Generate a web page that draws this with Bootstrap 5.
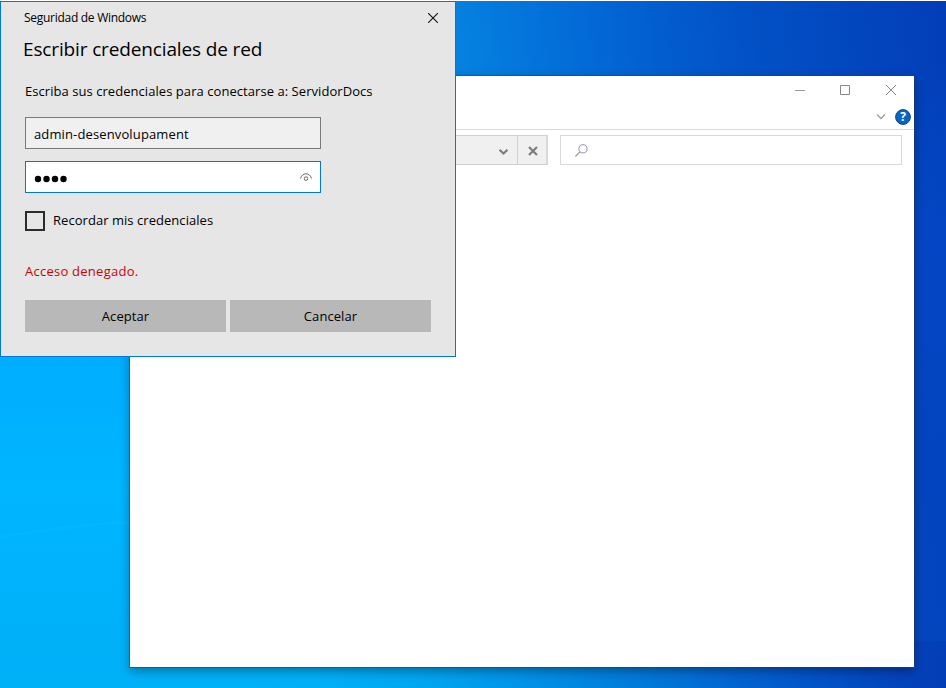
<!DOCTYPE html>
<html lang="es">
<head>
<meta charset="utf-8">
<meta name="viewport" content="width=device-width, initial-scale=1">
<title>Seguridad de Windows</title>
<link href="https://cdn.jsdelivr.net/npm/bootstrap@5.3.0/dist/css/bootstrap.min.css" rel="stylesheet">
<style>
body{font-family:"Open Sans","Noto Sans",sans-serif;font-size:13px;line-height:20px;color:#000}
svg{display:block}
.desktop{width:946px;height:688px;border-top:1px solid #fff;
 background:
 linear-gradient(180deg,rgba(3,70,196,0) 60px,rgba(4,73,203,.6) 240px,rgba(3,69,193,.7) 450px,rgba(3,64,184,0) 687px) 100% 0/46px 687px no-repeat,
 linear-gradient(83deg,#0581e0 530px,#036dd8 635px,#025ecf 725px,#0250c5 825px,#0246be 925px,#033db7 1017px) 0 0/946px 640px no-repeat,
 linear-gradient(90deg,#00b2f9 0,#00b0f7 320px,#00a3f0 440px,#008be2 560px,#0271d6 680px,#0256ca 800px,#0345bc 890px,#033db5 946px) 0 100%/946px 48px no-repeat}
.side{left:0;top:350px;width:130px;height:338px;background:linear-gradient(180deg,#00adff,#00b6ff 140px,#00b4fd 190px,#00b0f7)}
.ray{left:0;top:520px}
.explorer{left:130px;top:76px;width:784px;height:591px;background:#fff;box-shadow:0 0 0 1px rgba(50,60,75,.5),0 4px 10px rgba(0,0,0,.36)}
.titlebar{height:28px;padding-right:18px;gap:36px}
.titlebar svg:first-child{margin-right:-1px}
.ribbon{height:26px;border-bottom:1px solid #dadada;padding-right:3px;gap:9px}
.toolrow{padding:5px 12px 0 0;gap:12px}
.addr{width:418px;height:30px;background:#f0f0f0;border:1px solid #d0d0d0;border-right-width:2px;border-right-color:#d9d9d9}
.stopbtn{width:30px;border-left:1px solid #d0d0d0;padding-top:2px;margin-right:-1px;padding-left:1px}
.find{height:30px;border:1px solid #d9d9d9;padding-left:14px}
.dialog{left:0;top:1px;width:456px;height:356px;background:#e6e6e6;border:1px solid #0078d7;padding:0 24px}
.cap{height:32px;font-size:12px;margin-left:-1px;margin-right:-7px}
.cap span{letter-spacing:-.28px}
.heading{font-size:19px;line-height:28px;margin:1px 0 0 -2px;font-weight:400;letter-spacing:-.14px}
.msg{margin:18px 0 0;height:20px;letter-spacing:.055px}
.field{width:296px;height:32px;padding:1px 8px 0;border:1px solid #7a7a7a;background:#f0f0f0;letter-spacing:.13px}
.field.active{border-color:#0078d7;background:#fff;margin-top:12px;padding-top:0}
.field.active svg:first-child{margin-top:3px}
.box{width:20px;height:20px;border:2px solid #2b2b2b}
.remember{margin-top:18px;gap:8px;height:20px;letter-spacing:.045px}
.remember span{margin-top:-2px}
.err{color:#c50500;margin-top:30px;height:20px;letter-spacing:.25px}
.dlg-actions{gap:4px;margin-top:19px}
.dlg-btn{width:201px;height:32px;background:#b8b8b8;border:0;border-radius:0;padding:0;font-size:13px;line-height:32px;color:#000;letter-spacing:.07px}
</style>
</head>
<body>
<main class="desktop position-relative overflow-hidden">
<div class="side position-absolute"></div>
</main>
<svg class="ray position-absolute" width="130" height="30" viewBox="0 0 130 30"><path d="M0 17Q75 5 130 2" fill="none" stroke="#08bbff" stroke-width="3" opacity=".5"/></svg>

<section class="explorer position-absolute">
 <div class="titlebar d-flex justify-content-end align-items-center">
  <svg width="10" height="10" viewBox="0 0 10 10"><path d="M0 5.500H10" stroke="#999"/></svg>
  <svg width="10" height="10" viewBox="0 0 10 10"><path d="M.5 .5h9v9h-9z" fill="none" stroke="#888"/></svg>
  <svg width="10" height="10" viewBox="0 0 10 10"><path d="M0 0l10 10M10 0l-10 10" fill="none" stroke="#8a8a8a"/></svg>
 </div>
 <div class="ribbon d-flex justify-content-end align-items-center">
  <svg width="10" height="7" viewBox="0 0 10 7"><path d="M1 1.500l4 4 4-4" fill="none" stroke="#a0a0a0" stroke-width="1.4"/></svg>
  <svg width="16" height="16" viewBox="0 0 16 16"><circle cx="8" cy="8" r="7.400" fill="#0566c6" stroke="#174774" stroke-width="1"/><text x="8" y="12.400" text-anchor="middle" font-family="Open Sans" font-weight="700" font-size="12" fill="#fff">?</text></svg>
 </div>
 <div class="toolrow d-flex">
  <div class="addr d-flex justify-content-end flex-shrink-0">
   <div class="d-flex align-items-center pe-2 pt-1"><svg width="11" height="8" viewBox="0 0 11 8"><path d="M1.500 1.700l4 3.800 4-3.800" fill="none" stroke="#7d7d7d" stroke-width="2.2"/></svg></div>
   <div class="stopbtn d-flex align-items-center justify-content-center"><svg width="10" height="10" viewBox="0 0 10 10"><path d="M1 1l8 8M9 1l-8 8" stroke="#7d7d7d" stroke-width="2.2"/></svg></div>
  </div>
  <div class="find d-flex align-items-center flex-grow-1"><svg width="13" height="13" viewBox="0 0 13 13" fill="none"><circle cx="8" cy="4.800" r="4.100" stroke="#9a94a8" stroke-width="1"/><path d="M5 7.800L.4 12.400" stroke="#9a8f8a" stroke-width="1.2"/></svg></div>
 </div>
</section>

<section class="dialog position-absolute">
 <div class="cap d-flex justify-content-between align-items-center"><span>Seguridad de Windows</span>
  <svg width="10" height="10" viewBox="0 0 10 10"><path d="M0 0l10 10M10 0l-10 10" stroke="#111" stroke-width="1.1"/></svg></div>
 <h1 class="heading"><span>Escribir credenciales de red</span></h1>
 <p class="msg"><span>Escriba sus credenciales para conectarse a: ServidorDocs</span></p>
 <div class="pt-3">
  <div class="field d-flex align-items-center"><span>admin-desenvolupament</span></div>
  <div class="field active d-flex align-items-center justify-content-between">
   <svg width="34" height="8" viewBox="0 0 34 8"><g fill="#000"><circle cx="4" cy="4" r="3.200"/><circle cx="12.500" cy="4" r="3.200"/><circle cx="21" cy="4" r="3.200"/><circle cx="29.500" cy="4" r="3.200"/></g></svg>
   <svg width="12" height="9" viewBox="0 0 12 9" fill="none" stroke="#666"><path d="M.4 5.500C1.500 2.200 3.600.8 6 .8s4.500 1.400 5.600 4.700"/><circle cx="6" cy="5.600" r="1.800"/></svg>
  </div>
 </div>
 <div class="remember d-flex align-items-center"><div class="box"></div><span>Recordar mis credenciales</span></div>
 <p class="err mb-0"><span>Acceso denegado.</span></p>
 <div class="dlg-actions d-flex"><button class="dlg-btn btn">Aceptar</button><button class="dlg-btn btn">Cancelar</button></div>
</section>
<script src="https://cdn.jsdelivr.net/npm/bootstrap@5.3.0/dist/js/bootstrap.bundle.min.js"></script>
</body>
</html>
